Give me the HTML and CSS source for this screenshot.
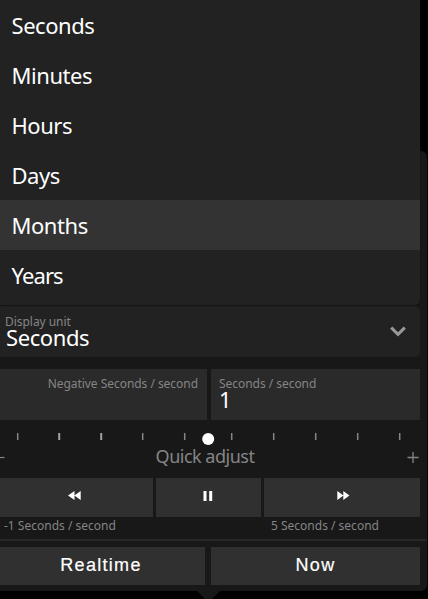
FILE: index.html
```html
<!DOCTYPE html>
<html lang="en">
<head>
<meta charset="utf-8">
<title>Time controls</title>
<link rel="stylesheet" href="styles.css">
</head>
<body>
<main class="popover">
  <ul class="menu">
    <li>Seconds</li>
    <li>Minutes</li>
    <li>Hours</li>
    <li>Days</li>
    <li class="active">Months</li>
    <li class="years">Years</li>
  </ul>
  <div class="select">
    <div>
      <div class="label">Display unit</div>
      <div class="value">Seconds</div>
    </div>
    <svg class="chevron" width="16" height="11" viewBox="0 0 16 11"><path d="M1.2 1.7 8 8.3 14.8 1.7" fill="none" stroke="#999" stroke-width="3"/></svg>
  </div>
  <div class="inputs">
    <div class="input negative"><div class="label neg-label">Negative Seconds / second</div></div>
    <div class="input"><div class="label rate">Seconds / second</div><div class="value one">1</div></div>
  </div>
  <svg class="slider" width="420" height="27" viewBox="0 420 420 27">
    <path d="M17.7 433v7M142.7 433v7M184.7 433v7M231.7 433v7M273.7 433v7M315.7 433v7M357.7 433v7M399.7 433v7" stroke="#858585" stroke-width="1.5"/>
    <path d="M59.2 433v7M101.2 433v7" stroke="#a0a0a0" stroke-width="2"/>
    <circle cx="208.2" cy="439" r="6" fill="#fff"/>
  </svg>
  <div class="adjust">
    <svg width="12" height="12" viewBox="0 0 12 12"><path d="M0 5.5h4.5" stroke="#858585" stroke-width="1.2"/></svg>
    <span>Quick adjust</span>
    <svg width="12" height="12" viewBox="0 0 12 12"><path d="M.5 5.5h11M6 0v11" stroke="#858585" stroke-width="1.3"/></svg>
  </div>
  <div class="transport">
    <div class="button"><svg class="rewind" width="13" height="9" viewBox="0 0 13 9"><path d="M6.5 0v9L0 4.5zM12.7 0v9L6.3 4.5z" fill="#fff"/></svg></div>
    <div class="button"><svg width="10" height="10" viewBox="0 0 10 10"><path d="M.5 0h3v10h-3zM6.2 0h3v10h-3z" fill="#fff"/></svg></div>
    <div class="button"><svg class="forward" width="13" height="9" viewBox="0 0 13 9"><path d="M.3 0v9l6.2-4.5zM6.3 0v9l6.2-4.5z" fill="#fff"/></svg></div>
  </div>
  <div class="rates"><span class="slow">-1 Seconds / second</span><span class="fast">5 Seconds / second</span></div>
  <div class="actions">
    <div class="button realtime">Realtime</div>
    <div class="button">Now</div>
  </div>
  <svg class="pointer" width="24" height="8" viewBox="0 0 24 8"><path d="M1 0h23l-8 8H9z" fill="#181818"/></svg>
</main>
</body>
</html>
```
FILE: styles.css
```css
* { box-sizing: border-box; }
body {
  margin: 0;
  padding-top: 151px;
  height: 599px;
  overflow: hidden;
  background: #000;
  color: #fff;
  font-family: "Noto Sans", sans-serif;
}
.popover {
  position: relative;
  width: 427px;
  height: 440px;
  padding-top: 155px;
  background: #181818;
  border-radius: 0 6px 6px 0;
}
.menu {
  position: absolute;
  top: -151px;
  left: 0;
  width: 420px;
  height: 305px;
  margin: 0;
  padding: 0;
  list-style: none;
  background: #222;
  border-radius: 0 0 5px 0;
  box-shadow: 0 1px 2px #151515;
}
.menu li {
  height: 50px;
  padding-left: 11.5px;
  font-size: 22px;
  line-height: 51px;
  letter-spacing: -0.45px;
}
.menu .active { background: #333; }
.menu .years { letter-spacing: -0.9px; }
.select {
  display: flex;
  justify-content: space-between;
  width: 420px;
  height: 51px;
  padding: 8px 14px 0 5px;
  background: #222;
  border-radius: 0 5px 5px 0;
}
.label {
  color: #858585;
  font-size: 12px;
  line-height: 16px;
  white-space: nowrap;
  letter-spacing: -0.04px;
}
.value {
  padding-left: 1px;
  font-size: 22px;
  line-height: 15px;
  letter-spacing: -0.4px;
}
.chevron { margin-top: 12px; }
.inputs {
  display: grid;
  grid-template-columns: 206.5px 209.5px;
  gap: 4px;
  width: 420px;
  height: 51px;
  margin-top: 12px;
}
.input {
  padding: 7px 8.5px 0 8.5px;
  background: #2a2a2a;
}
.one {
  padding-left: 0;
  line-height: 14px;
}
.negative { text-align: right; }
.slider { display: block; }
.adjust {
  display: flex;
  justify-content: space-between;
  align-items: center;
  width: 419px;
  height: 20px;
  color: #858585;
  font-size: 18px;
  line-height: 20px;
  letter-spacing: -0.5px;
}
.adjust svg { margin-top: 2px; }
.adjust span {
  padding-right: 9px;
  padding-bottom: 3px;
}
.transport {
  display: grid;
  grid-template-columns: 152.5px 104.5px 156px;
  gap: 3.5px;
  width: 420px;
  height: 39px;
  margin-top: 11px;
}
.button {
  display: flex;
  align-items: center;
  justify-content: center;
  background: #303030;
}
.transport .button { padding-bottom: 4px; }
.rewind { margin-left: -4px; }
.forward { margin-left: 2px; }
.rates {
  display: grid;
  grid-template-columns: 267px 153px;
  height: 22px;
  padding-left: 4px;
  color: #858585;
  font-size: 12px;
  line-height: 17px;
}
.actions {
  display: grid;
  grid-template-columns: 205px 209px;
  gap: 6px;
  height: 46px;
  padding-top: 6px;
  border-top: 2px solid #272727;
}
.actions .button {
  padding-bottom: 3px;
  font: 500 18px/20px "Liberation Sans", sans-serif;
  letter-spacing: 1.3px;
  -webkit-text-stroke: .2px #fff;
}
.actions .realtime { padding-right: 3px; }
.pointer {
  position: absolute;
  top: 440px;
  left: 196px;
}
```
